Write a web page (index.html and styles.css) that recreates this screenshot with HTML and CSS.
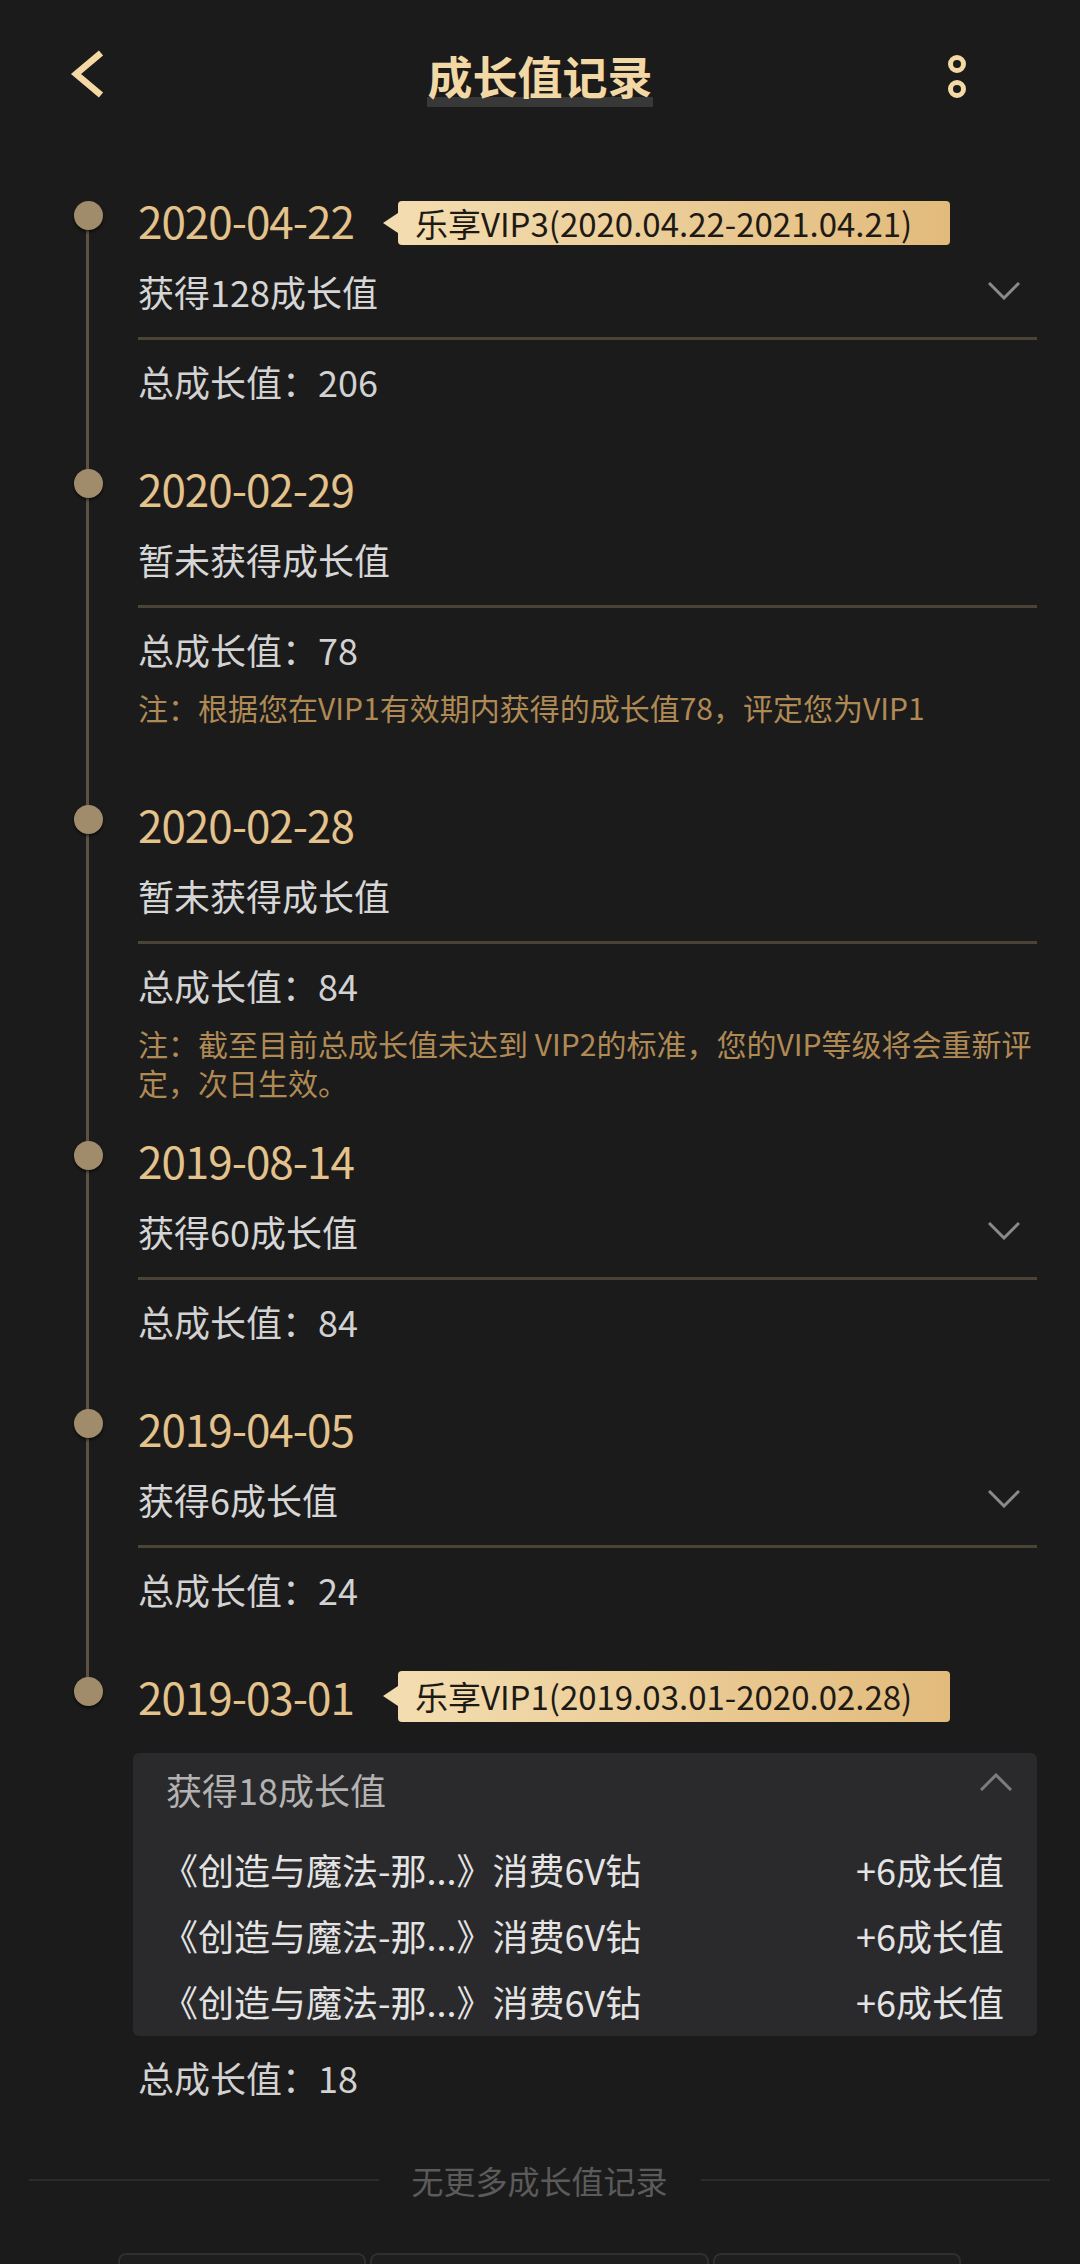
FILE: index.html
```html
<!DOCTYPE html>
<html lang="zh-CN">
<head>
  <meta charset="UTF-8" />
  <meta name="viewport" content="width=device-width, initial-scale=1.0">
  <title>成长值记录</title>
  <link rel="stylesheet" href="styles.css">
</head>
<body>
<div class="page">

  <div class="top-bar">
    <svg class="back" width="36" height="52" viewBox="0 0 36 52">
      <polyline points="31,3 6,24 31,45" fill="none" stroke="#f5d9a4" stroke-width="6.5" />
    </svg>
    <h1 class="title">成长值记录</h1>
    <svg class="more" width="20" height="48" viewBox="0 0 20 48">
      <circle cx="10" cy="12" r="6.5" fill="none" stroke="#f5d9a4" stroke-width="5" />
      <circle cx="10" cy="37" r="6.5" fill="none" stroke="#f5d9a4" stroke-width="5" />
    </svg>
  </div>

  <div class="timeline">

    <div class="item">
      <div class="date-row">
        <span class="date">2020-04-22</span>
        <span class="tag">乐享VIP3(2020.04.22-2021.04.21)</span>
      </div>
      <div class="gain">
        <span>获得128成长值</span>
        <svg width="32" height="18" viewBox="0 0 32 18"><polyline points="1,1 16,16 31,1" fill="none" stroke="#8a8a8a" stroke-width="3" /></svg>
      </div>
      <div class="rule"></div>
      <div class="total">总成长值：206</div>
    </div>

    <div class="item">
      <div class="date-row">
        <span class="date">2020-02-29</span>
      </div>
      <div class="gain">
        <span>暂未获得成长值</span>
      </div>
      <div class="rule"></div>
      <div class="total">总成长值：78</div>
      <div class="note">注：根据您在VIP1有效期内获得的成长值78，评定您为VIP1</div>
    </div>

    <div class="item">
      <div class="date-row">
        <span class="date">2020-02-28</span>
      </div>
      <div class="gain">
        <span>暂未获得成长值</span>
      </div>
      <div class="rule"></div>
      <div class="total">总成长值：84</div>
      <div class="note">注：截至目前总成长值未达到 VIP2的标准，您的VIP等级将会重新评定，次日生效。</div>
    </div>

    <div class="item">
      <div class="date-row">
        <span class="date">2019-08-14</span>
      </div>
      <div class="gain">
        <span>获得60成长值</span>
        <svg width="32" height="18" viewBox="0 0 32 18"><polyline points="1,1 16,16 31,1" fill="none" stroke="#8a8a8a" stroke-width="3" /></svg>
      </div>
      <div class="rule"></div>
      <div class="total">总成长值：84</div>
    </div>

    <div class="item">
      <div class="date-row">
        <span class="date">2019-04-05</span>
      </div>
      <div class="gain">
        <span>获得6成长值</span>
        <svg width="32" height="18" viewBox="0 0 32 18"><polyline points="1,1 16,16 31,1" fill="none" stroke="#8a8a8a" stroke-width="3" /></svg>
      </div>
      <div class="rule"></div>
      <div class="total">总成长值：24</div>
    </div>

    <div class="item">
      <div class="date-row">
        <span class="date">2019-03-01</span>
        <span class="tag tall">乐享VIP1(2019.03.01-2020.02.28)</span>
      </div>
      <div class="detail">
        <div class="detail-head">
          <span>获得18成长值</span>
          <svg width="32" height="18" viewBox="0 0 32 18"><polyline points="1,17 16,2 31,17" fill="none" stroke="#7c7c7c" stroke-width="3" /></svg>
        </div>
        <div class="detail-list">
          <div class="detail-row"><span>《创造与魔法-那...》消费6V钻</span><span>+6成长值</span></div>
          <div class="detail-row"><span>《创造与魔法-那...》消费6V钻</span><span>+6成长值</span></div>
          <div class="detail-row"><span>《创造与魔法-那...》消费6V钻</span><span>+6成长值</span></div>
        </div>
      </div>
      <div class="total">总成长值：18</div>
    </div>

  </div>

  <div class="end">
    <span class="end-line"></span>
    <span>无更多成长值记录</span>
    <span class="end-line"></span>
  </div>

  <div class="tabs">
    <div class="tab small"></div>
    <div class="tab wide"></div>
    <div class="tab small"></div>
  </div>

</div>
</body>
</html>
```

FILE: styles.css
```css
* {
  box-sizing: border-box;
}

body {
  margin: 0;
  background: #1b1b1b;
  font-family: "Noto Sans CJK SC", "Noto Sans", sans-serif;
  color: #d4d4d4;
}

.page {
  width: 1080px;
  height: 2264px;
  overflow: hidden;
}

/* header */
.top-bar {
  height: 152px;
  display: grid;
  grid-template-columns: 1fr auto 1fr;
  align-items: center;
}

.back {
  display: block;
  margin-left: 70px;
}

.title {
  margin: 0;
  font-size: 45px;
  font-weight: bold;
  line-height: 50px;
  padding: 6px 0;
  color: #f2d8a5;
  box-shadow: inset 0 -10px 0 #383838;
}

.more {
  display: block;
  justify-self: end;
  margin-right: 113px;
}

/* timeline */
.timeline {
  padding: 28px 43px 0 138px;
}

.item {
  position: relative;
  padding: 10px 0 45px;
}

.item::before {
  content: '';
  position: absolute;
  left: -64px;
  top: 21px;
  width: 29px;
  height: 29px;
  border-radius: 50%;
  background: #a08b6b;
  box-shadow: 0 2px 3px rgba(0, 0, 0, 0.6);
  z-index: 1;
}

.item::after {
  content: '';
  position: absolute;
  left: -52px;
  width: 3px;
  top: 36px;
  bottom: -36px;
  background: #5c5142;
}

.item:last-child::after {
  display: none;
}

.date-row {
  display: flex;
  align-items: center;
  height: 60px;
}

.date {
  font-size: 44px;
  letter-spacing: -1px;
  line-height: 60px;
  color: #e4c28b;
}

.tag {
  position: relative;
  margin: 6px 0 0 44px;
  height: 44px;
  line-height: 44px;
  padding: 0 38px 0 17px;
  font-size: 33px;
  color: #1d1a15;
  background: linear-gradient(90deg, #f3ddb0, #e2bb7c);
  border-radius: 4px;
}

.tag.tall {
  margin-top: 0;
  height: 51px;
  line-height: 51px;
}

.tag::before {
  content: '';
  position: absolute;
  left: -15px;
  top: 50%;
  margin-top: -10px;
  border-top: 10px solid transparent;
  border-bottom: 10px solid transparent;
  border-right: 15px solid #f3ddb0;
}

.gain {
  display: flex;
  justify-content: space-between;
  align-items: center;
  height: 82px;
  font-size: 36px;
  color: #d6d6d6;
}

.gain svg {
  margin-right: 17px;
}

.rule {
  height: 3px;
  margin-top: 5px;
  background: #4b4335;
}

.total {
  margin-top: 19px;
  font-size: 36px;
  line-height: 44px;
  color: #d2d2d2;
}

.note {
  margin: 17px 0 -27px;
  min-height: 78px;
  font-size: 30px;
  line-height: 39px;
  color: #b08a55;
}

/* expanded detail */
.detail {
  margin: 27px 0 0 -5px;
  padding: 14px 25px 2px 29px;
  background: #2a2a2c;
  border-radius: 6px;
}

.detail-head {
  display: flex;
  justify-content: space-between;
  height: 44px;
  line-height: 44px;
  padding-left: 4px;
  font-size: 36px;
  color: #b3b3b3;
}

.detail-head svg {
  margin-top: 6px;
}

.detail-list {
  margin-top: 25px;
  padding-right: 8px;
}

.detail-row {
  display: flex;
  justify-content: space-between;
  height: 66px;
  line-height: 66px;
  font-size: 36px;
  color: #e4e4e4;
}

/* footer */
.end {
  display: flex;
  align-items: center;
  gap: 33px;
  height: 40px;
  margin-top: 16px;
  padding: 0 30px 0 29px;
  font-size: 32px;
  color: #5b5b5b;
}

.end-line {
  flex: 1;
  height: 2px;
  background: #2c2c2c;
}

.tabs {
  display: flex;
  gap: 4px;
  margin: 53px 0 0 118px;
}

.tab {
  height: 60px;
  border: 2px solid #2f2f2f;
  border-radius: 8px;
  background: #1e1e1e;
}

.tab.small {
  width: 248px;
}

.tab.wide {
  width: 339px;
}
```
